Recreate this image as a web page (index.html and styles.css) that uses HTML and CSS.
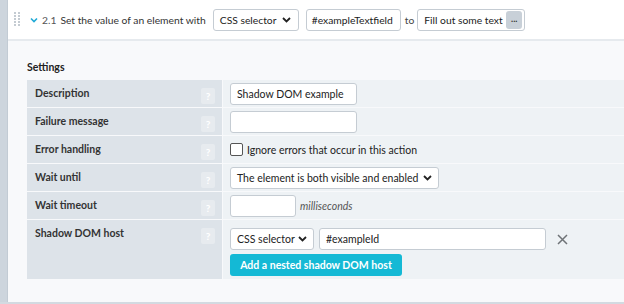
FILE: index.html
```html
<!DOCTYPE html>
<html>
<head>
<meta charset="utf-8">
<link rel="stylesheet" href="styles.css">
</head>
<body>
<div class="card">
  <div class="stripe"></div>
  <div class="main">
    <div class="header">
      <div class="grip">
        <svg width="6" height="16" viewBox="0 0 6 16"><g fill="#c4cbd2"><rect x="0" y="0" width="2" height="2"/><rect x="4" y="0" width="2" height="2"/><rect x="0" y="3" width="2" height="2"/><rect x="4" y="3" width="2" height="2"/><rect x="0" y="6" width="2" height="2"/><rect x="4" y="6" width="2" height="2"/><rect x="0" y="9" width="2" height="2"/><rect x="4" y="9" width="2" height="2"/><rect x="0" y="12" width="2" height="2"/><rect x="4" y="12" width="2" height="2"/></g></svg>
      </div>
      <svg class="chev" width="8" height="6" viewBox="0 0 8 6"><path d="M1 1.5 L4 4.5 L7 1.5" fill="none" stroke="#1fa9d6" stroke-width="1.6"/></svg>
      <span class="num">2.1</span>
      <span class="title">Set the value of an element with</span>
      <div class="select hsel"><span>CSS selector</span><svg width="9" height="6" viewBox="0 0 9 6"><path d="M1 1 L4.5 4.5 L8 1" fill="none" stroke="#222" stroke-width="1.8"/></svg></div>
      <div class="input hin1">#exampleTextfield</div>
      <span class="to">to</span>
      <div class="input hin2"><span>Fill out some text</span><span class="dots">...</span></div>
    </div>
    <div class="body">
      <div class="stitle">Settings</div>
      <div class="table">
        <div class="row">
          <div class="lbl"><span>Description</span><span class="help">?</span></div>
          <div class="val"><div class="input w127">Shadow DOM example</div></div>
        </div>
        <div class="row">
          <div class="lbl"><span>Failure message</span><span class="help">?</span></div>
          <div class="val"><div class="input w127"></div></div>
        </div>
        <div class="row">
          <div class="lbl"><span>Error handling</span><span class="help">?</span></div>
          <div class="val"><span class="cb"></span><span>Ignore errors that occur in this action</span></div>
        </div>
        <div class="row">
          <div class="lbl"><span>Wait until</span><span class="help">?</span></div>
          <div class="val"><div class="select wsel"><span>The element is both visible and enabled</span><svg width="9" height="6" viewBox="0 0 9 6"><path d="M1 1 L4.5 4.5 L8 1" fill="none" stroke="#222" stroke-width="1.8"/></svg></div></div>
        </div>
        <div class="row">
          <div class="lbl"><span>Wait timeout</span><span class="help">?</span></div>
          <div class="val"><div class="input w66"></div><span class="ms">milliseconds</span></div>
        </div>
        <div class="row tall">
          <div class="lbl"><span>Shadow DOM host</span><span class="help">?</span></div>
          <div class="val col">
            <div class="line">
              <div class="select ssel"><span>CSS selector</span><svg width="9" height="6" viewBox="0 0 9 6"><path d="M1 1 L4.5 4.5 L8 1" fill="none" stroke="#222" stroke-width="1.8"/></svg></div>
              <div class="input sin">#exampleId</div>
              <svg class="x" width="11" height="11" viewBox="0 0 11 11"><path d="M1 1 L10 10 M10 1 L1 10" stroke="#6f7377" stroke-width="1.5"/></svg>
            </div>
            <div class="btn">Add a nested shadow DOM host</div>
          </div>
        </div>
      </div>
    </div>
  </div>
</div>
</body>
</html>
```
FILE: styles.css
```css
html, body { margin: 0; padding: 0; }
body {
  width: 624px; height: 304px; overflow: hidden;
  font-family: "Lato", "Open Sans", sans-serif;
  font-size: 10.5px; color: #222;
  background: #d3dae1;
}
.card { display: flex; height: 302px; border-bottom: 2px solid #d3dae1; }
.stripe { width: 7px; background: #cdd5dd; border-right: 1px solid #c2cbd4; }
.main { flex: 1; display: flex; flex-direction: column; background: #f8f9fb; }
.header {
  height: 39px; background: #fff; border-bottom: 2px solid #e6eaee;
  display: flex; align-items: center; font-size: 10.3px;
}
.grip { margin-left: 6px; width: 6px; display: flex; margin-top: 1px; }
.chev { margin-left: 10px; }
.num { margin-left: 4px; color: #555; }
.title { margin-left: 4px; color: #333; }
.input, .select {
  box-sizing: border-box; height: 22px; background: #fff;
  border: 1px solid #c5ccd3; border-radius: 3px;
  display: flex; align-items: center; padding: 0 6px;
  color: #222; white-space: nowrap; overflow: hidden;
}
.select { justify-content: space-between; }
.hsel { margin-left: 7px; width: 86px; padding-right: 7px; }
.hin1 { margin-left: 7px; width: 95px; padding: 0 5px; }
.to { margin-left: 4px; color: #444; }
.hin2 { margin-left: 3px; width: 108px; padding: 0 2px 0 6px; justify-content: space-between; }
.dots {
  width: 16px; height: 18px; background: #c8d0d8; border-radius: 3px;
  display: flex; align-items: center; justify-content: center; flex: none;
  font-size: 9px; line-height: 1; padding-bottom: 3px; box-sizing: border-box; color: #333; font-weight: bold;
}
.body { flex: 1; padding: 20px 0 0 19px; }
.stitle { font-weight: bold; height: 19px; color: #222; }
.table { display: flex; flex-direction: column; gap: 1px; }
.row { display: flex; height: 27px; }
.row.tall { height: 59px; }
.lbl {
  width: 180px; padding: 0 7px 0 8px; background: #dde3e9;
  display: flex; justify-content: space-between; align-items: flex-start;
  font-weight: bold; color: #333;
}
.lbl > span:first-child { margin-top: 7px; }
.help {
  margin-top: 8px; width: 14px; height: 16px; background: #e7ebef; border-radius: 2px;
  color: #fff; font-size: 10px; display: flex; align-items: center; justify-content: center; font-weight: bold;
}
.val {
  flex: 1; margin-left: 1px; background: #eef2f5; display: flex; align-items: center; padding-left: 7px;
}
.w127 { width: 127px; }
.w66 { width: 66px; }
.cb { width: 11px; height: 11px; border: 1px solid #555; border-radius: 2px; background: #fff; margin-right: 4px; }
.wsel { width: 209px; padding-right: 6px; }
.ms { font-style: italic; margin-left: 4px; color: #555; }
.val.col { flex-direction: column; align-items: flex-start; padding-top: 8px; }
.line { display: flex; align-items: center; }
.ssel { width: 84px; padding-right: 6px; }
.sin { margin-left: 5px; width: 227px; }
.x { margin-left: 11px; }
.btn {
  margin-top: 4px; background: #14b9d5; color: #fff; font-weight: bold; white-space: nowrap;
  height: 22px; width: 172px; border-radius: 3px; display: flex; align-items: center; justify-content: center;
}
```
